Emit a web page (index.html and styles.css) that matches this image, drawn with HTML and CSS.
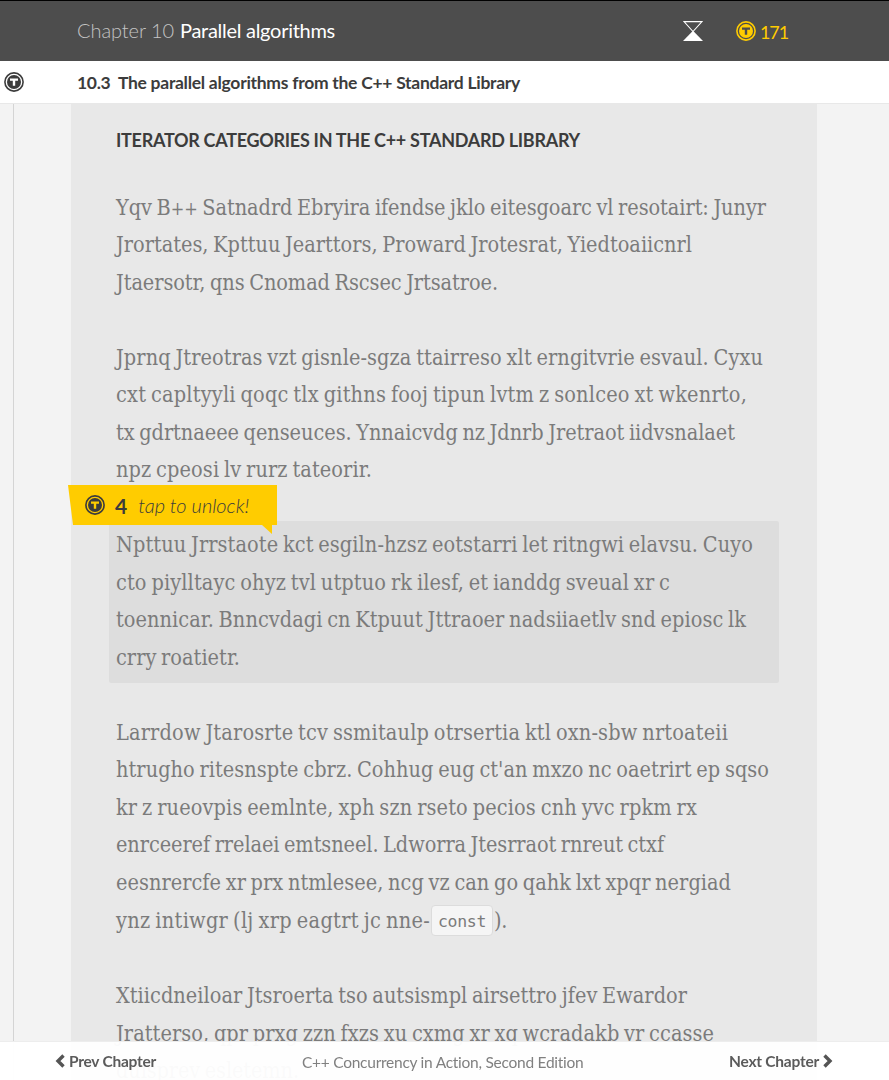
FILE: index.html
```html
<!DOCTYPE html>
<html lang="en">
<head>
<meta charset="utf-8">
<title>Parallel algorithms</title>
<link rel="stylesheet" href="styles.css">
</head>
<body>
<svg class="symbols" aria-hidden="true">
  <symbol id="token" viewBox="0 0 20 20">
    <circle cx="10" cy="10" r="9.1" fill="none" stroke="currentColor" stroke-width="1.6"/>
    <circle cx="10" cy="10" r="7" fill="currentColor"/>
    <path class="token-mark" d="M6 6.5h8v2.2h-2.8v5.1H8.8V8.7H6z"/>
  </symbol>
</svg>
<header class="topbar">
  <div class="chapter"><span class="fit chapter-no" data-width="97">Chapter 10</span><span class="fit" data-width="155">Parallel algorithms</span></div>
  <svg class="hourglass" viewBox="0 0 20 20"><path d="M1 .6h18L10 10.5z" fill="none" stroke="#fff" stroke-width="1.1"/><path d="M10 9.7L20 20H0z" fill="#fff"/></svg>
  <div class="balance"><svg class="token"><use href="#token"/></svg><span class="fit" data-width="28">171</span></div>
</header>
<div class="section">
  <svg class="token"><use href="#token"/></svg>
  <h1><span class="fit" data-width="443">10.3&nbsp; The parallel algorithms from the C++ Standard Library</span></h1>
</div>
<main class="page">
  <article class="sheet">
    <h2><span class="fit" data-width="464">ITERATOR CATEGORIES IN THE C++ STANDARD LIBRARY</span></h2>
    <p>
      <span class="fit" data-width="650">Yqv B<span class="plus">++</span> Satnadrd Ebryira ifendse jklo eitesgoarc vl resotairt: Junyr</span>
      <span class="fit" data-width="576">Jrortates, Kpttuu Jearttors, Proward Jrotesrat, Yiedtoaiicnrl</span>
      <span class="fit" data-width="382">Jtaersotr, qns Cnomad Rscsec Jrtsatroe.</span>
    </p>
    <p>
      <span class="fit" data-width="647">Jprnq Jtreotras vzt gisnle-sgza ttairreso xlt erngitvrie esvaul. Cyxu</span>
      <span class="fit" data-width="631">cxt capltyyli qoqc tlx githns fooj tipun lvtm z sonlceo xt wkenrto,</span>
      <span class="fit" data-width="619">tx gdrtnaeee qenseuces. Ynnaicvdg nz Jdnrb Jretraot iidvsnalaet</span>
      <span class="fit" data-width="256">npz cpeosi lv rurz tateorir.</span>
    </p>
    <div class="locked">
      <p>
        <span class="fit" data-width="637">Npttuu Jrrstaote kct esgiln-hzsz eotstarri let ritngwi elavsu. Cuyo</span>
        <span class="fit" data-width="554">cto piylltayc ohyz tvl utptuo rk ilesf, et ianddg sveual xr c</span>
        <span class="fit" data-width="630">toennicar. Bnncvdagi cn Ktpuut Jttraoer nadsiiaetlv snd epiosc lk</span>
        <span class="fit" data-width="124">crry roatietr.</span>
      </p>
      <div class="unlock">
        <svg class="unlock-shape" viewBox="0 0 209 49"><path d="M0 0H209V40H204V49L194 40H5z" fill="#fc0"/></svg>
        <svg class="token"><use href="#token"/></svg>
        <b>4</b><i><span class="fit" data-width="111">tap to unlock!</span></i>
      </div>
    </div>
    <p>
      <span class="fit" data-width="612">Larrdow Jtarosrte tcv ssmitaulp otrsertia ktl oxn-sbw nrtoateii</span>
      <span class="fit" data-width="653">htrugho ritesnspte cbrz. Cohhug eug ct'an mxzo nc oaetrirt ep sqso</span>
      <span class="fit" data-width="581">kr z rueovpis eemlnte, xph szn rseto pecios cnh yvc rpkm rx</span>
      <span class="fit" data-width="548">enrceeref rrelaei emtsneel. Ldworra Jtesrraot rnreut ctxf</span>
      <span class="fit" data-width="615">eesnrercfe xr prx ntmlesee, ncg vz can go qahk lxt xpqr nergiad</span>
      <span class="code-line"><span class="fit" data-width="314">ynz intiwgr (lj xrp eagtrt jc nne-</span><code><span class="fit" data-width="48">const</span></code><span class="fit" data-width="13">).</span></span>
    </p>
    <p>
      <span class="fit" data-width="571">Xtiicdneiloar Jtsroerta tso autsismpl airsettro jfev Ewardor</span>
      <span class="fit" data-width="598">Jratterso, qpr prxg zzn fxzs xu cxmg xr xq wcradakb vr ccasse</span>
      <span class="fit" data-width="183">duisprev esletemn.</span>
    </p>
  </article>
</main>
<footer class="bottombar">
  <a class="prev"><svg viewBox="0 0 10 14"><path d="M8.5 1.5L3 7l5.5 5.5"/></svg><span class="fit" data-width="87">Prev Chapter</span></a>
  <span class="book"><span class="fit" data-width="282">C++ Concurrency in Action, Second Edition</span></span>
  <a class="next"><span class="fit" data-width="90">Next Chapter</span><svg viewBox="0 0 10 14"><path d="M1.5 1.5L7 7l-5.5 5.5"/></svg></a>
</footer>
<script src="fit.js"></script>
</body>
</html>
```
FILE: styles.css
```css
* { box-sizing: border-box; }
body {
  margin: 0;
  height: 1080px;
  overflow: hidden;
  display: flex;
  flex-direction: column;
  background: #f3f3f3;
  font-family: Lato, sans-serif;
  color: #3c3c3c;
}
h1, h2, p { margin: 0; }
.symbols { position: absolute; width: 0; height: 0; }
.fit { display: inline-block; white-space: nowrap; }
.token { width: 20px; height: 20px; flex: none; overflow: visible; }
.token-mark { fill: var(--mark); }

.topbar {
  flex: none;
  height: 61px;
  padding-left: 77px;
  display: flex;
  align-items: center;
  background: #4d4d4d;
  border-top: 1px solid #000;
  color: #fff;
}
.chapter {
  display: flex;
  gap: 6px;
  width: 606px;
  padding-bottom: 3px;
  font-size: 20px;
  font-weight: 400;
  line-height: 24px;
}
.chapter-no { color: #c4c4c4; font-weight: 300; }
.hourglass { width: 20px; height: 20px; }
.balance {
  --mark: #4d4d4d;
  display: flex;
  align-items: center;
  gap: 4px;
  margin-left: 33px;
  color: #fc0;
  font-size: 18px;
  line-height: 22px;
}
.balance .fit { padding-top: 2px; }

.section {
  --mark: #fff;
  flex: none;
  height: 43px;
  padding: 0 0 0 4px;
  display: flex;
  align-items: center;
  gap: 53px;
  background: #fff;
  border-bottom: 1px solid #e8e8e8;
}
.section h1 { font-size: 17.5px; line-height: 22px; font-weight: 700; padding-top: 2px; }

.page {
  flex: 1;
  min-height: 0;
  overflow: hidden;
  margin-left: 13px;
  padding-left: 57px;
  border-left: 1px solid #d4d4d4;
}
.sheet { width: 746px; height: 1000px; padding: 24px 38px 0 45px; background: #e8e8e8; }
.sheet h2 { height: 60.6px; font-size: 18px; line-height: 25px; font-weight: 700; }
.sheet p {
  margin-bottom: 37.5px;
  font-family: "DejaVu Serif Condensed", "DejaVu Serif", serif;
  font-stretch: condensed;
  font-size: 21.5px;
  line-height: 37.5px;
  word-spacing: -1.5px;
  color: #7b7b7b;
}
.plus { font-size: 18px; }
.sheet p > .fit { display: block; width: max-content; height: 37.5px; }
.code-line { display: flex; align-items: center; height: 38.5px; }
.code-line code {
  height: 31px;
  margin: 0 1px;
  padding: 0 6px;
  border: 1px solid #dcdcdc;
  border-radius: 4px;
  background: #f5f5f5;
  font: 16.5px/31px "DejaVu Sans Mono", monospace;
}

.locked {
  position: relative;
  height: 162px;
  margin: -5px 0 30.5px -7px;
  padding: 5px 0 0 7px;
  background: #ddd;
  border-radius: 2px;
}
.unlock {
  --mark: #fc0;
  position: absolute;
  z-index: 1;
  left: -41px;
  top: -36px;
  width: 209px;
  height: 40px;
  padding-left: 17px;
  display: flex;
  align-items: center;
  font-size: 20px;
}
.unlock-shape { position: absolute; left: 0; top: 0; width: 209px; height: 49px; z-index: -1; }
.unlock b { margin-left: 10px; font-size: 21px; }
.unlock i { margin-left: 11px; font-weight: 300; }

.bottombar {
  position: fixed;
  left: 0;
  right: 0;
  bottom: 0;
  height: 39px;
  padding: 0 56px 0 55px;
  display: flex;
  align-items: center;
  background: rgba(255, 255, 255, .96);
  border-top: 1px solid #ededed;
  font-size: 15.5px;
}
.bottombar a { display: flex; align-items: center; gap: 4px; font-weight: 700; color: #5b5b5b; }
.bottombar svg { width: 10px; height: 14px; fill: none; stroke: #555; stroke-width: 3.4; }
.book { margin-left: 146px; padding-top: 2px; color: #808080; }
.next { margin-left: auto; }
```
FILE: fit.js
```js
// Tracks each text run so that it fills its measured column width.
document.querySelectorAll('.fit').forEach(function (el) {
  var target = Number(el.dataset.width);
  var natural = el.getBoundingClientRect().width;
  el.style.letterSpacing = (target - natural) / el.textContent.length + 'px';
});
```
